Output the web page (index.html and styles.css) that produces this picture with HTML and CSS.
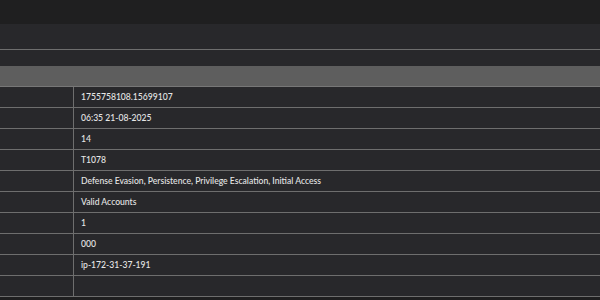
FILE: index.html
```html
<!DOCTYPE html>
<html>
<head>
	<meta charset="utf-8">
	<title>Event details</title>
	<link rel="stylesheet" href="styles.css">
</head>
<body>

<div class="topbar"></div>

<section class="panel">
	<div class="panel-head"></div>
	<div class="panel-sub"></div>
	<div class="group-title"></div>

	<table class="details">
		<tr><td class="key"></td><td class="val">1755758108.15699107</td></tr>
		<tr><td class="key"></td><td class="val">06:35 21-08-2025</td></tr>
		<tr><td class="key"></td><td class="val">14</td></tr>
		<tr><td class="key"></td><td class="val">T1078</td></tr>
		<tr><td class="key"></td><td class="val">Defense Evasion, Persistence, Privilege Escalation, Initial Access</td></tr>
		<tr><td class="key"></td><td class="val">Valid Accounts</td></tr>
		<tr><td class="key"></td><td class="val">1</td></tr>
		<tr><td class="key"></td><td class="val">000</td></tr>
		<tr><td class="key"></td><td class="val">ip-172-31-37-191</td></tr>
		<tr><td class="key"></td><td class="val"></td></tr>
	</table>
</section>

</body>
</html>
```

FILE: styles.css
```css
body {
	margin: 0;
	background-color: #1f1f20;
	color: #e6e6e6;
	font-family: 'Lato', 'Liberation Sans', sans-serif;
	overflow: hidden;
}

.topbar {
	height: 24px;
	background-color: #1f1f20;
}

.panel {
	background-color: #28282b;
}

.panel-head {
	height: 25px;
	border-bottom: 1px solid #6e6e6e;
}

.panel-sub {
	height: 16px;
}

.group-title {
	height: 20px;
	background-color: #5e5e5e;
	border-bottom: 1px solid #777777;
}

table.details {
	width: 100%;
	border-collapse: collapse;
	background-color: #28282b;
}

table.details td {
	height: 20px;
	padding: 0 0 0 7px;
	border-bottom: 1px solid #6e6e6e;
	font-size: 8.6px;
	font-weight: 500;
	vertical-align: middle;
}

table.details td.key {
	width: 73px;
	padding: 0;
	border-right: 1px solid #6e6e6e;
}
```
